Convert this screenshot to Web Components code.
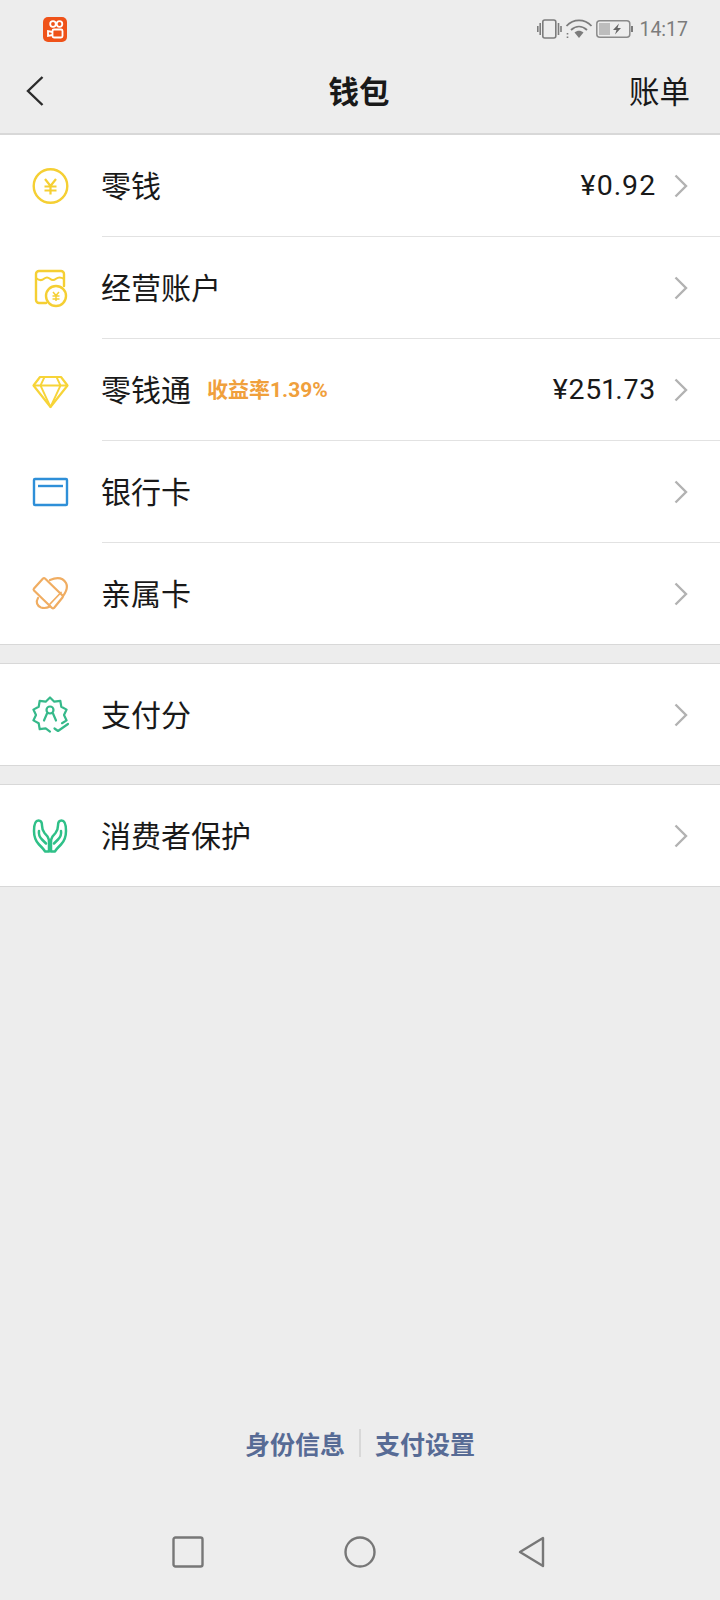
<!DOCTYPE html>
<html lang="zh">
<head>
<meta charset="utf-8">
<style>
  html, body { margin: 0; background: #ededed; }
  body { width: 720px; height: 1600px; overflow: hidden; font-family: "Noto Sans CJK SC", "Noto Sans", sans-serif; color: #191919; }
  wallet-page { height: 1600px; }
</style>
</head>
<body>
<wallet-page>
  <status-bar slot="top"></status-bar>
  <nav-header slot="top" title="钱包" action="账单"></nav-header>

  <list-group>
    <list-row label="零钱" value="¥0.92" divider>
      <svg slot="icon" viewBox="0 0 40 40" width="40" height="40" fill="none" stroke="#f5cf33" stroke-width="2.400">
        <circle cx="20.500" cy="20" r="16.800"/>
        <path d="M15 13l5.500 7 5.500-7M14.500 20.500h12M14.500 24.500h12M20.500 20v8.500" stroke-width="2.200"/>
      </svg>
    </list-row>
    <list-row label="经营账户" divider>
      <svg slot="icon" viewBox="0 0 40 40" width="40" height="40" fill="none" stroke="#f5cf33" stroke-width="2.400" stroke-linejoin="round" stroke-linecap="round">
        <path d="M16 35H9a3 3 0 0 1-3-3V6a3 3 0 0 1 3-3h22a3 3 0 0 1 3 3v12"/>
        <path d="M6 10c3 2.500 6 2.500 8 .8s4-1.700 6 0 4 1.700 6 0 5-1.700 8 0" stroke-width="2"/>
        <circle cx="26" cy="28" r="10" fill="#fff"/>
        <path d="M23 24l3 3.500 3-3.500M22.500 28h7M22.500 31h7M26 27.500V33" stroke-width="1.500" stroke-linecap="butt"/>
      </svg>
    </list-row>
    <list-row label="零钱通" note="收益率1.39%" value="¥251.73" divider>
      <svg slot="icon" viewBox="0 0 40 40" width="40" height="40" fill="none" stroke="#f7d438" stroke-width="2.200" stroke-linejoin="round">
        <path d="M10 7h21l6.500 8.500-17 21.500-17-21.500z"/>
        <path d="M3.500 15.500h34M14.500 7l-4 8.500 10 21.500 10-21.500-4-8.500" stroke-width="1.800"/>
      </svg>
    </list-row>
    <list-row label="银行卡" divider>
      <svg slot="icon" viewBox="0 0 40 40" width="40" height="40" fill="none" stroke="#2e8fd8" stroke-width="2.400">
        <rect x="4" y="7" width="33" height="26" rx="1"/>
        <path d="M8 14h25"/>
      </svg>
    </list-row>
    <list-row label="亲属卡" compact>
      <svg slot="icon" viewBox="0 0 40 40" width="40" height="40" fill="none" stroke="#f0ad62" stroke-width="2.200" stroke-linejoin="round" stroke-linecap="round">
        <path d="M13 4.500a1.500 1.500 0 0 1 2 0l17.500 17a1.500 1.500 0 0 1 0 2l-8.500 10.500a1.500 1.500 0 0 1-2 0L4 16.500a1.500 1.500 0 0 1 0-2z"/>
        <path d="M20 6c7-3 13-2 16 3 2 4 0 9-3 13"/>
        <path d="M8 24c-2.500 4-1 8 3 9.500 3 1 6 .5 9-1"/>
        <path d="M20 30 31 18.500" stroke-width="1.800"/>
      </svg>
    </list-row>
  </list-group>

  <list-group>
    <list-row label="支付分" compact>
      <svg slot="icon" viewBox="0 0 40 40" width="40" height="40" fill="none" stroke="#36b98a" stroke-width="2.200" stroke-linejoin="round" stroke-linecap="round">
        <path d="M32 28.200l4.600-2.800L34 20l2.600-5.400-5.300-2.800-1-6-6 .9L20 2.500l-4.300 4.200-6-.9-1 6-5.300 2.800L6 20l-2.600 5.400 5.300 2.800 1 6 6-.9 4.300 3.300"/>
        <path d="M24.500 33.500l3.500 2.500 10-7"/>
        <circle cx="20" cy="15" r="3.500"/>
        <path d="M17 18.500l-3 7M23 18.500l3 7"/>
      </svg>
    </list-row>
  </list-group>

  <list-group>
    <list-row label="消费者保护" compact>
      <svg slot="icon" viewBox="0 0 40 40" width="40" height="40" fill="none" stroke="#2fc088" stroke-width="2.500" stroke-linejoin="round" stroke-linecap="round">
        <path d="M19 35.500h-4c-1-2-3-4-6-7C5.500 25 4 21 4 15 4 8 6 4.500 8.500 4.500c2.500 0 3.500 2.500 3.500 5 0 3 .5 5 2.500 7.500l3 3.500c1.500 2 1.500 4 1.500 6.500z"/>
        <path d="M9 15c-.5 3 .5 6 3 8.500l4 4"/>
        <g transform="matrix(-1 0 0 1 40 0)">
          <path d="M19 35.500h-4c-1-2-3-4-6-7C5.500 25 4 21 4 15 4 8 6 4.500 8.500 4.500c2.500 0 3.500 2.500 3.500 5 0 3 .5 5 2.500 7.500l3 3.500c1.500 2 1.500 4 1.500 6.500z"/>
          <path d="M9 15c-.5 3 .5 6 3 8.500l4 4"/>
        </g>
      </svg>
    </list-row>
  </list-group>

  <footer-links slot="bottom">
    <span slot="left">身份信息</span>
    <span slot="right">支付设置</span>
  </footer-links>
  <android-nav slot="bottom"></android-nav>
</wallet-page>

<script>
  class WalletPage extends HTMLElement {
    constructor() {
      super();
      this.attachShadow({ mode: 'open' });
      this.shadowRoot.innerHTML = `
        <style>
          :host { display: flex; flex-direction: column; background: #ededed; }
          .groups { display: flex; flex-direction: column; gap: 18px; }
          .spacer { flex: 1; }
        </style>
        <slot name="top"></slot>
        <div class="groups"><slot></slot></div>
        <div class="spacer"></div>
        <slot name="bottom"></slot>
      `;
    }
  }

  class StatusBar extends HTMLElement {
    constructor() {
      super();
      this.attachShadow({ mode: 'open' });
      this.shadowRoot.innerHTML = `
        <style>
          :host { display: flex; align-items: center; justify-content: space-between; height: 58px; padding: 0 32px 0 43px; box-sizing: border-box; }
          .right { display: flex; align-items: center; gap: 3px; color: #7c7c7c; }
          .time { font: 19.500px/24px Roboto, "Liberation Sans", sans-serif; margin: 1px 0 0 3px; }
          svg { display: block; }
        </style>
        <svg width="24" height="25" viewBox="0 0 24 25">
          <rect width="24" height="25" rx="5" fill="#ef5219"/>
          <g fill="none" stroke="#fff" stroke-width="1.800">
            <circle cx="10" cy="7" r="2.800"/><circle cx="16.500" cy="7" r="2.800"/>
            <rect x="9.500" y="12.500" width="10" height="8" rx="1.500"/>
            <path d="M9.500 15 5 14v5l4.500-1"/>
          </g>
        </svg>
        <div class="right">
          <svg width="25" height="20" viewBox="0 0 25 20" fill="none" stroke="#7c7c7c" stroke-width="1.600">
            <rect x="5.800" y="1" width="13" height="18" rx="2"/>
            <path d="M3.200 4v12M.8 7v6M21.500 4v12M24 7v6"/>
          </svg>
          <svg width="28" height="20" viewBox="0 0 28 20" fill="none" stroke="#7c7c7c" stroke-width="1.800">
            <path d="M1.500 7c7-7.500 18-7.500 25 0M6 11c5-4.500 11-4.500 16 0"/>
            <path d="M9.500 13.500c3-2.500 6-2.500 9 0L14 19z" fill="#7c7c7c" stroke="none"/>
            <path d="M2.500 14v1.500M2.500 17.500V19" stroke-width="1.600"/>
          </svg>
          <svg width="37" height="18" viewBox="0 0 37 18" fill="none">
            <rect x=".8" y=".8" width="33" height="16.400" rx="3" stroke="#8a8a8a" stroke-width="1.500"/>
            <rect x="3" y="3" width="11" height="12" fill="#bdbdbd"/>
            <path d="M36 6v6" stroke="#7c7c7c" stroke-width="2"/>
            <path d="M23 3.500 17 10h3.500L19 14.500 25 8h-3.500z" fill="#666"/>
          </svg>
          <span class="time">14:17</span>
        </div>
      `;
    }
  }

  class NavHeader extends HTMLElement {
    constructor() {
      super();
      this.attachShadow({ mode: 'open' });
    }

    connectedCallback() {
      this.shadowRoot.innerHTML = `
        <style>
          :host { display: grid; grid-template-columns: 1fr auto 1fr; align-items: center; height: 76px; padding: 0 30px 10px 26px; box-sizing: border-box; border-bottom: 1px solid #d8d8d8; }
          .title { font-size: 30.500px; font-weight: 700; line-height: 40px; margin: -2px 0 0 2px; }
          .action { justify-self: end; font-size: 30.500px; line-height: 40px; margin-top: -2px; }
          svg { display: block; }
        </style>
        <svg width="18" height="30" viewBox="0 0 18 30" fill="none" stroke="#2b2b2b" stroke-width="2.400"><path d="M16.500 1 2 15l14.500 14"/></svg>
        <span class="title">${this.getAttribute('title')}</span>
        <span class="action">${this.getAttribute('action')}</span>
      `;
    }
  }

  class ListGroup extends HTMLElement {
    constructor() {
      super();
      this.attachShadow({ mode: 'open' });
      this.shadowRoot.innerHTML = `
        <style>
          :host { display: block; background: #fff; border-bottom: 1px solid #d8d8d8; }
          :host(:not(:first-child)) { border-top: 1px solid #d8d8d8; }
        </style>
        <slot></slot>
      `;
    }
  }

  class ListRow extends HTMLElement {
    constructor() {
      super();
      this.attachShadow({ mode: 'open' });
    }

    connectedCallback() {
      const note = this.getAttribute('note');
      const value = this.getAttribute('value');
      this.shadowRoot.innerHTML = `
        <style>
          :host { display: flex; align-items: stretch; height: 102px; background: #fff; }
          :host([compact]) { height: 101px; }
          .icon { flex: 0 0 102px; box-sizing: border-box; padding-left: 30px; display: flex; align-items: center; }
          .body { flex: 1; display: flex; align-items: center; padding-right: 32px; }
          :host([divider]) .body { box-shadow: inset 0 -1px 0 #e2e2e2; }
          .label { font-size: 30px; line-height: 40px; margin: -4px 0 0 -1px; }
          .note { margin-left: 16px; font-size: 21px; font-weight: 700; color: #f0a03c; line-height: 30px; }
          .note, .value { font-family: Roboto, "Noto Sans CJK SC", sans-serif; }
          .value { margin-left: auto; font-size: 28.500px; line-height: 40px; letter-spacing: .8px; margin-top: -1px; font-variant-numeric: proportional-nums; }
          .chev { margin-left: auto; display: block; }
          .value + .chev { margin-left: 18px; }
        </style>
        <div class="icon"><slot name="icon"></slot></div>
        <div class="body">
          <span class="label">${this.getAttribute('label')}</span>
          ${note ? `<span class="note">${note}</span>` : ''}
          ${value ? `<span class="value">${value}</span>` : ''}
          <svg class="chev" width="14" height="24" viewBox="0 0 14 24" fill="none" stroke="#b2b2b2" stroke-width="2.400"><path d="M1.500 1.500 12 12 1.500 22.500"/></svg>
        </div>
      `;
    }
  }

  class FooterLinks extends HTMLElement {
    constructor() {
      super();
      this.attachShadow({ mode: 'open' });
      this.shadowRoot.innerHTML = `
        <style>
          :host { display: flex; justify-content: center; align-items: center; font-size: 25px; font-weight: 700; line-height: 30px; color: #576b95; margin-bottom: 46px; }
          .sep { width: 2px; height: 28px; background: #d8d8d8; margin: 0 14px; }
        </style>
        <slot name="left"></slot>
        <div class="sep"></div>
        <slot name="right"></slot>
      `;
    }
  }

  class AndroidNav extends HTMLElement {
    constructor() {
      super();
      this.attachShadow({ mode: 'open' });
      this.shadowRoot.innerHTML = `
        <style>
          :host { display: flex; justify-content: center; align-items: center; gap: 140px; height: 96px; }
          svg { display: block; }
        </style>
        <svg width="32" height="32" viewBox="0 0 32 32" fill="none" stroke="#777" stroke-width="2.400"><rect x="1.500" y="1.500" width="29" height="29" rx="2"/></svg>
        <svg width="32" height="32" viewBox="0 0 32 32" fill="none" stroke="#777" stroke-width="2.400"><circle cx="16" cy="16" r="14.500"/></svg>
        <svg width="32" height="32" viewBox="0 0 32 32" fill="none" stroke="#777" stroke-width="2.400" stroke-linejoin="round"><path d="M27 2v28L4 16z"/></svg>
      `;
    }
  }

  customElements.define('wallet-page', WalletPage);
  customElements.define('status-bar', StatusBar);
  customElements.define('nav-header', NavHeader);
  customElements.define('list-group', ListGroup);
  customElements.define('list-row', ListRow);
  customElements.define('footer-links', FooterLinks);
  customElements.define('android-nav', AndroidNav);
</script>
</body>
</html>
